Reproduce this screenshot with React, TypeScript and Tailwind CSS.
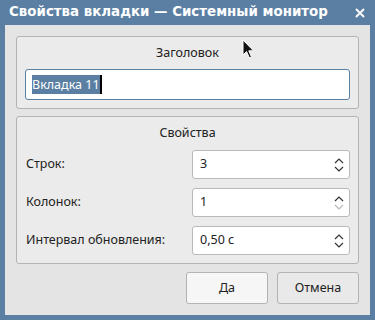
import React from 'react';

const font = { fontFamily: '"Noto Sans", "Open Sans", sans-serif' };

const SpinArrows: React.FC<{ downDim?: boolean }> = ({ downDim }) => (
  <svg width="12" height="20" viewBox="0 0 12 20" className="shrink-0">
    <path d="M2 8 L6 4 L10 8" fill="none" stroke="#333" strokeWidth="1.2" />
    <path d="M2 12 L6 16 L10 12" fill="none" stroke={downDim ? '#b8b8b8' : '#333'} strokeWidth="1.2" />
  </svg>
);

const SpinRow: React.FC<{ label: string; value: string; downDim?: boolean }> = ({ label, value, downDim }) => (
  <div className="flex items-center">
    <span className="flex-1 text-[12.5px] text-[#222]">{label}</span>
    <div className="w-[158px] h-[29px] bg-white border border-[#b9b9b9] rounded-[3px] flex items-center pl-[7px] pr-[4px]">
      <span className="flex-1 text-[12.5px] text-[#222]">{value}</span>
      <SpinArrows downDim={downDim} />
    </div>
  </div>
);

const App: React.FC = () => {
  return (
    <div className="relative w-[375px] h-[320px] bg-[#5a7fa2] flex flex-col select-none" style={font}>
      {/* Title bar */}
      <div className="h-[25px] flex items-center pl-[9px] pr-[10px]">
        <span
          className="flex-1 text-white font-bold text-[13.4px]"
          style={{ fontFamily: '"DejaVu Sans", sans-serif' }}
        >
          Свойства вкладки — Системный монитор
        </span>
        <svg width="10" height="10" viewBox="0 0 10 10">
          <path d="M1 1 L9 9 M9 1 L1 9" stroke="white" strokeWidth="1.8" />
        </svg>
      </div>

      {/* Body */}
      <div className="flex-1 mx-[5px] mb-[5px] bg-[#e4e4e4] px-[11px] pt-[11px] flex flex-col">
        {/* Title group */}
        <div className="h-[73px] border border-[#b3b3b3] rounded-[3px] bg-[#ebebeb] px-[8px] flex flex-col">
          <div className="h-[32px] flex items-center justify-center text-[12.5px] text-[#222]">Заголовок</div>
          <div className="h-[31px] bg-white border border-[#5a7fa2] rounded-[3px] flex items-center pl-[6px]">
            <span className="bg-[#5a7fa2] text-white text-[12.5px] leading-[19px]">Вкладка 11</span>
            <span className="w-[2px] h-[19px] bg-black" />
          </div>
        </div>

        {/* Properties group */}
        <div className="mt-[7px] h-[148px] border border-[#b3b3b3] rounded-[3px] bg-[#ebebeb] px-[8px] flex flex-col">
          <div className="h-[33px] flex items-center justify-center text-[12.5px] text-[#222]">Свойства</div>
          <div className="flex flex-col gap-[9px] pl-[1px]">
            <SpinRow label="Строк:" value="3" />
            <SpinRow label="Колонок:" value="1" downDim />
            <SpinRow label="Интервал обновления:" value="0,50 с" />
          </div>
        </div>

        {/* Buttons */}
        <div className="mt-[8px] flex justify-end gap-[9px]">
          <button className="w-[82px] h-[32px] bg-[#f6f6f6] border border-[#b3b3b3] rounded-[3px] text-[12.5px] text-[#222]">
            Да
          </button>
          <button className="w-[82px] h-[32px] bg-[#e9e9e9] border border-[#b3b3b3] rounded-[3px] text-[12.5px] text-[#222]">
            Отмена
          </button>
        </div>
      </div>

      {/* Mouse pointer */}
      <svg className="absolute left-[242px] top-[39px]" width="14" height="22" viewBox="0 0 14 22">
        <path d="M1 1 L1 16 L4.5 12.5 L7.5 19 L9.5 18 L6.8 11.8 L11.5 11.8 Z" fill="#111" stroke="white" strokeWidth="1" />
      </svg>
    </div>
  );
};

export default App;
